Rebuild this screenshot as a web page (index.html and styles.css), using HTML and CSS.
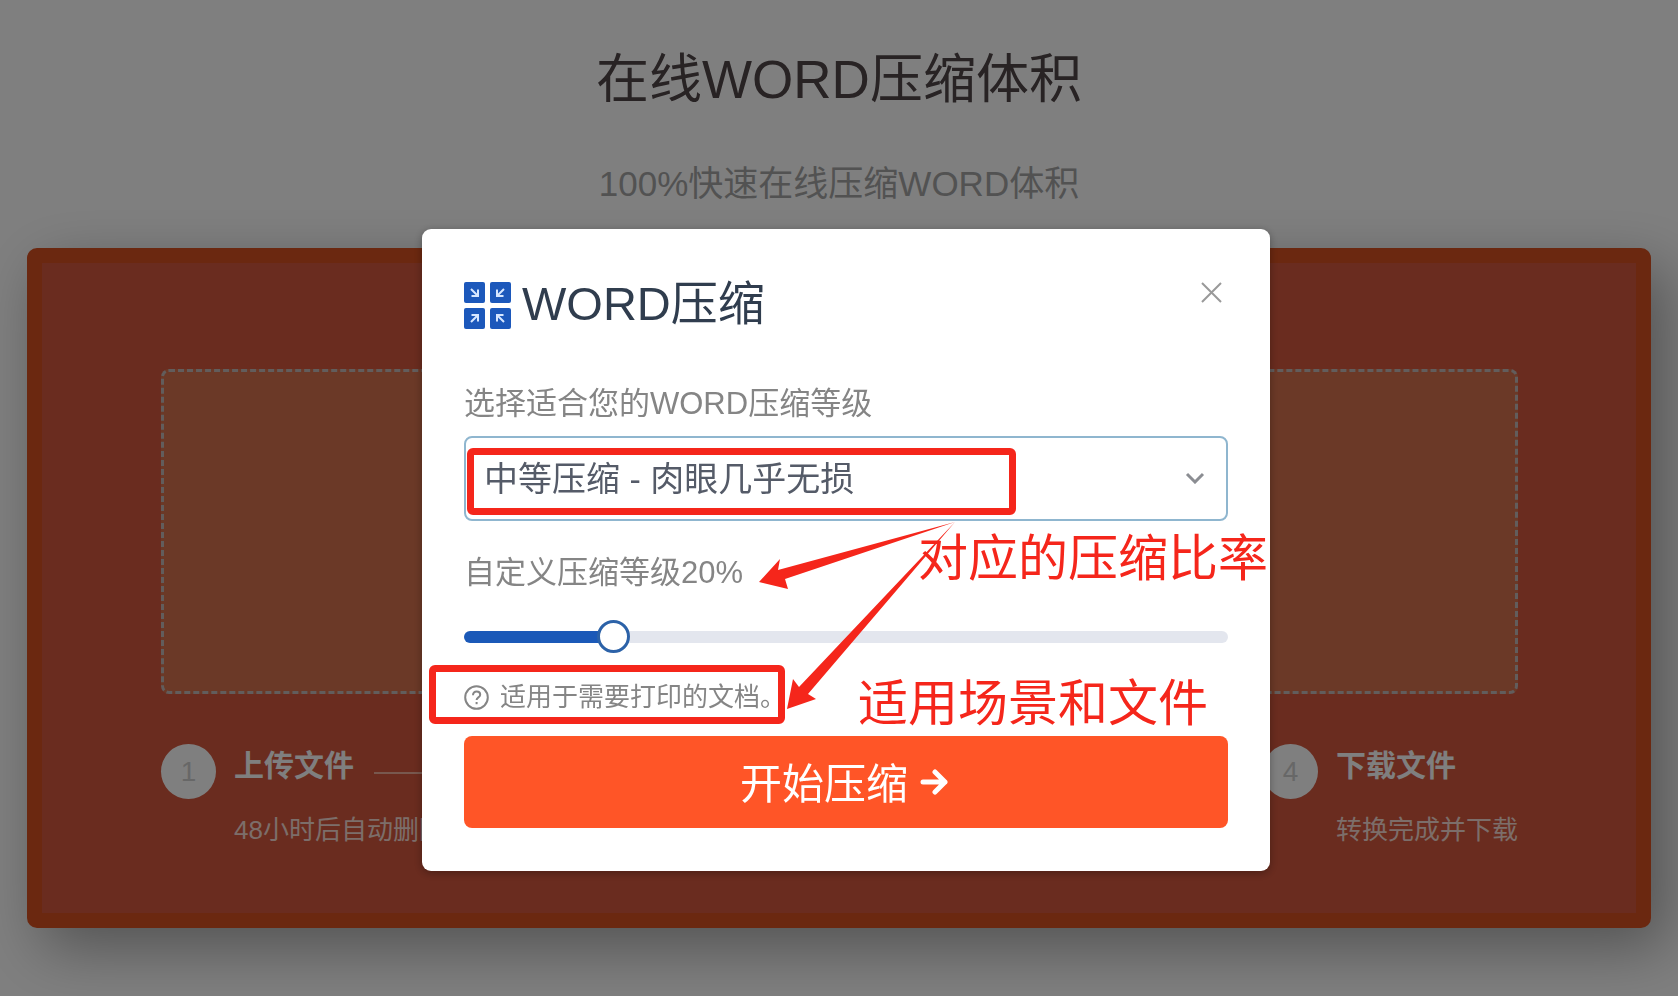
FILE: index.html
```html
<!DOCTYPE html>
<html lang="zh-CN">
<head>
<meta charset="utf-8">
<title>在线WORD压缩体积</title>
<link rel="stylesheet" href="styles.css">
</head>
<body>
<main class="page">
  <h1 class="page-title">在线WORD压缩体积</h1>
  <p class="page-subtitle">100%快速在线压缩WORD体积</p>
  <section class="card">
    <div class="dropzone"></div>
    <ol class="steps">
      <li class="step step-grow">
        <span class="step-number">1</span>
        <div class="step-body">
          <div class="step-head"><h2 class="step-title">上传文件</h2><span class="step-line"></span></div>
          <p class="step-text">48小时后自动删除</p>
        </div>
      </li>
      <li class="step">
        <span class="step-number">4</span>
        <div class="step-body">
          <div class="step-head"><h2 class="step-title">下载文件</h2></div>
          <p class="step-text">转换完成并下载</p>
        </div>
      </li>
    </ol>
  </section>
</main>

<div class="overlay">
  <div class="dialog" role="dialog" aria-modal="true" aria-labelledby="dialog-title">
    <header class="dialog-header">
      <svg class="logo" viewBox="0 0 47 47" aria-hidden="true">
        <g fill="#1c58bb">
          <rect width="21" height="21" rx="2"/><rect x="26" width="21" height="21" rx="2"/>
          <rect y="26" width="21" height="21" rx="2"/><rect x="26" y="26" width="21" height="21" rx="2"/>
        </g>
        <g fill="none" stroke="#d6e6ff" stroke-width="2">
          <path d="M7 7l7 7M14 7.500V14H7.500"/>
          <path d="M40 7l-7 7M33 7.500V14h6.500"/>
          <path d="M7 40l7-7M7.500 33H14v6.500"/>
          <path d="M40 40l-7-7M39.500 33H33v6.500"/>
        </g>
      </svg>
      <h2 class="dialog-title" id="dialog-title">WORD压缩</h2>
      <button class="close" type="button" aria-label="关闭">
        <svg viewBox="0 0 21 21"><path d="M1 1l19 19M20 1L1 20"/></svg>
      </button>
    </header>

    <label class="label" for="level">选择适合您的WORD压缩等级</label>
    <div class="select-wrap">
      <select class="select" id="level"><option>中等压缩 - 肉眼几乎无损</option></select>
      <svg class="chevron" viewBox="0 0 20 12" aria-hidden="true"><path d="M2 2l8 8 8-8"/></svg>
      <span class="mark mark-select"></span>
    </div>

    <label class="label label-slider" for="ratio">自定义压缩等级20%</label>
    <input class="slider" id="ratio" type="range" min="0" max="110" value="20">

    <p class="hint">
      <svg class="hint-icon" viewBox="0 0 25 25" aria-hidden="true">
        <circle cx="12.500" cy="12.500" r="11.300"/>
        <path d="M9 10.200c0-2.400 1.500-3.700 3.600-3.700s3.600 1.300 3.600 3.200c0 2.800-3.600 2.600-3.600 5.300"/>
        <path d="M12.600 17v2.200"/>
      </svg>
      <span>适用于需要打印的文档。</span>
      <span class="mark mark-hint"></span>
    </p>

    <button class="submit" type="button">
      <span>开始压缩</span>
      <svg class="submit-arrow" viewBox="0 0 28 26" aria-hidden="true"><path d="M3 13h22M15 3l10 10-10 10"/></svg>
    </button>

    <svg class="arrows" viewBox="0 0 848 642" aria-hidden="true">
      <path d="M533 293L356 341 358 330 337 353 366 360 363 350Z"/>
      <path d="M533 293L377 458 371 450 365 480 394 470 386 465Z"/>
    </svg>
    <span class="note note-ratio">对应的压缩比率</span>
    <span class="note note-scene">适用场景和文件</span>
  </div>
</div>
</body>
</html>
```
FILE: styles.css
```css
* { box-sizing: border-box; }

body {
  margin: 0;
  min-height: 100vh;
  overflow: hidden;
  background: #fff;
  font-family: "Liberation Sans", "Noto Sans CJK SC", sans-serif;
}

h1, h2, p, ol { margin: 0; padding: 0; font-weight: 400; }

.page { padding: 48px 27px 0; }

.page-title {
  color: #504648;
  font-size: 53px;
  line-height: 64px;
  text-align: center;
}

.page-subtitle {
  margin: 48px 0 40px;
  color: #a4a4a4;
  font-size: 35px;
  line-height: 48px;
  text-align: center;
}

.card {
  padding: 106px 118px 67px 119px;
  border: 15px solid #d65020;
  border-radius: 10px;
  background: #d4583e;
  box-shadow: 15px 20px 60px rgba(0, 0, 0, .35);
}

.dropzone {
  height: 325px;
  border: 3px dashed #c4bab8;
  border-radius: 8px;
  background: #d6724e;
}

.steps {
  display: flex;
  margin-top: 50px;
  list-style: none;
}

.step { display: flex; gap: 18px; }
.step-grow, .step-grow .step-body { flex: 1; }

.step-number {
  display: grid;
  flex: none;
  place-content: center;
  width: 55px;
  height: 55px;
  border-radius: 50%;
  background: #fff;
  color: #cfcfcf;
  font-size: 28px;
}

.step-head { display: flex; align-items: center; gap: 20px; }

.step-title {
  color: #fff;
  font-size: 30px;
  font-weight: 700;
  line-height: 44px;
}

.step-line {
  flex: 1;
  height: 2px;
  margin-top: 14px;
  background: #f0b09c;
}

.step-text {
  margin-top: 26px;
  color: #f8dcd4;
  font-size: 26px;
  line-height: 32px;
}

.overlay {
  position: fixed;
  inset: 0;
  display: flex;
  align-items: flex-start;
  justify-content: center;
  padding: 229px 0 0 14px;
  background: rgba(0, 0, 0, .5);
}

.dialog {
  position: relative;
  width: 848px;
  max-width: 100%;
  padding: 53px 42px 43px;
  border-radius: 9px;
  background: #fff;
  box-shadow: 0 2px 8px rgba(0, 0, 0, .3);
}

.dialog-header { display: flex; align-items: flex-start; }
.logo { width: 47px; height: 47px; }

.dialog-title {
  margin-left: 11px;
  color: #303d4e;
  font-size: 47px;
  line-height: 43px;
}

.close {
  width: 21px;
  height: 21px;
  margin: 0 6px 0 auto;
  padding: 0;
  border: 0;
  background: none;
}

.close svg {
  display: block;
  fill: none;
  stroke: #999;
  stroke-width: 2;
}

.label {
  display: block;
  margin: 55px 0 12px;
  color: #858585;
  font-size: 31px;
  line-height: 40px;
}

.label-slider { margin: 32px 0 27px; }

.select-wrap { position: relative; }

.select {
  display: block;
  width: 100%;
  height: 85px;
  padding: 0 60px 0 18px;
  border: 2px solid #8fb6cf;
  border-radius: 8px;
  appearance: none;
  background: #fff;
  color: #555b68;
  font: inherit;
  font-size: 34px;
}

.chevron {
  position: absolute;
  top: 36px;
  right: 23px;
  width: 20px;
  height: 12px;
  fill: none;
  stroke: #8b8d92;
  stroke-width: 3;
}

.mark {
  position: absolute;
  border: 7px solid #f5261b;
  border-radius: 6px;
}

.mark-select {
  top: 12px;
  left: 3px;
  width: 549px;
  height: 67px;
}

.mark-hint {
  top: -15px;
  left: -35px;
  width: 356px;
  height: 59px;
}

.slider {
  display: block;
  width: 100%;
  height: 34px;
  margin: 0;
  appearance: none;
  background: none;
}

.slider::-webkit-slider-runnable-track {
  height: 12px;
  border-radius: 6px;
  background: linear-gradient(to right, #1b59b8 19%, #e3e6ee 19%);
}

.slider::-webkit-slider-thumb {
  width: 33px;
  height: 33px;
  margin-top: -11px;
  appearance: none;
  border: 3px solid #2c62a8;
  border-radius: 50%;
  background: #fff;
}

.hint {
  position: relative;
  display: flex;
  align-items: center;
  gap: 11px;
  margin: 26px 0 22px;
  color: #858585;
  font-size: 26px;
  line-height: 34px;
}

.hint-icon {
  width: 25px;
  height: 25px;
  fill: none;
  stroke: #858585;
  stroke-width: 2;
}

.submit {
  display: flex;
  align-items: center;
  justify-content: center;
  gap: 12px;
  width: 100%;
  height: 92px;
  padding: 0 4px 4px 0;
  border: 0;
  border-radius: 8px;
  background: #ff5527;
  color: #fff;
  font: inherit;
  font-size: 42px;
}

.submit-arrow {
  width: 28px;
  height: 26px;
  margin-top: 4px;
  fill: none;
  stroke: #fff;
  stroke-width: 5;
  stroke-linecap: round;
  stroke-linejoin: round;
}

.arrows {
  position: absolute;
  top: 0;
  left: 0;
  width: 848px;
  height: 642px;
  fill: #f5261b;
  pointer-events: none;
}

.note {
  position: absolute;
  color: #f5261b;
  font-size: 50px;
  line-height: 60px;
  white-space: nowrap;
}

.note-ratio { top: 300px; left: 496px; }
.note-scene { top: 445px; left: 436px; }
```
